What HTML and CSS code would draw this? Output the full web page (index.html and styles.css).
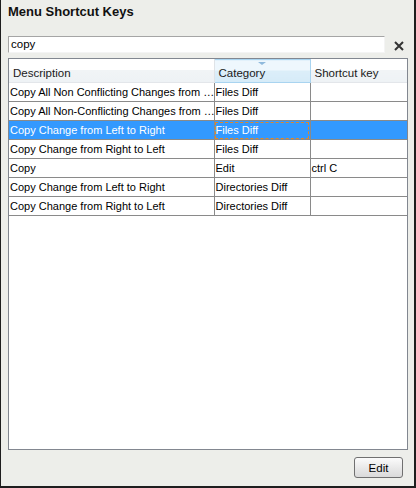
FILE: index.html
```html
<!DOCTYPE html>
<html>
<head>
<meta charset="utf-8">
<link rel="stylesheet" href="styles.css">
</head>
<body>
<div class="window">
  <div class="title">Menu Shortcut Keys</div>
  <div class="search-row">
    <div class="search">copy</div>
    <svg class="close" width="10" height="10" viewBox="0 0 10 10"><path d="M1 1L9 9M9 1L1 9" stroke="#333" stroke-width="2" fill="none"/></svg>
  </div>
  <div class="table-box">
    <table class="grid">
      <colgroup><col class="c1"><col class="c2"><col class="c3"></colgroup>
      <thead>
        <tr>
          <th>Description</th>
          <th class="sorted"><span class="tri"></span>Category</th>
          <th>Shortcut key</th>
        </tr>
      </thead>
      <tbody>
        <tr><td>Copy All Non Conflicting Changes from …</td><td>Files Diff</td><td></td></tr>
        <tr><td>Copy All Non-Conflicting Changes from …</td><td>Files Diff</td><td></td></tr>
        <tr class="sel"><td>Copy Change from Left to Right</td><td class="focus">Files Diff</td><td></td></tr>
        <tr><td>Copy Change from Right to Left</td><td>Files Diff</td><td></td></tr>
        <tr><td>Copy</td><td>Edit</td><td>ctrl C</td></tr>
        <tr><td>Copy Change from Left to Right</td><td>Directories Diff</td><td></td></tr>
        <tr><td>Copy Change from Right to Left</td><td>Directories Diff</td><td></td></tr>
      </tbody>
    </table>
  </div>
  <div class="footer">
    <button class="btn">Edit</button>
  </div>
</div>
</body>
</html>
```
FILE: styles.css
```css
html, body { margin: 0; padding: 0; }
body { font-family: "Liberation Sans", Arial, sans-serif; font-size: 11px; color: #000; }
.window {
  width: 416px; height: 488px; box-sizing: border-box;
  background: #edeeea;
  border-left: 1px solid #1e1e1e;
  border-right: 2px solid #1e1e1e;
  border-bottom: 2px solid #1e1e1e;
  padding: 0 6px 0 7px;
  display: flex; flex-direction: column;
}
.title { font-weight: bold; font-size: 13px; color: #111; padding-top: 4px; height: 16px; line-height: 16px; }
.search-row { margin-top: 16px; display: flex; align-items: center; height: 17px; }
.search {
  width: 377px; height: 17px; box-sizing: border-box;
  background: #fff;
  border-top: 1px solid #a5a5a5; border-left: 1px solid #a5a5a5;
  border-right: 1px solid #f4f4f4; border-bottom: 1px solid #f4f4f4;
  padding-left: 2px; line-height: 15px; font-size: 11.5px;
}
.close { margin-left: 9px; margin-top: 2px; }
.table-box {
  margin-top: 5px; height: 392px; box-sizing: border-box;
  border: 1px solid #828790; background: #fff; overflow: hidden;
}
.grid { border-collapse: collapse; table-layout: fixed; width: 399px; }
.c1 { width: 205px; } .c2 { width: 96px; } .c3 { width: 98px; }
th {
  height: 23px; box-sizing: border-box; padding: 4px 0 0 4px; font-weight: normal; text-align: left;
  background: linear-gradient(#ffffff 0, #ffffff 45%, #f1f4f6 46%, #eef2f5 100%);
  border-right: 1px solid #dfe3e7; border-bottom: 1px solid #e3e6ea; position: relative;
  white-space: nowrap; overflow: hidden; color: #1a1a1a; font-size: 11.5px;
}
th.sorted {
  background: linear-gradient(#eef7fd 0, #eef7fd 45%, #dceef9 46%, #d6ebf8 100%);
  border: 1px solid #a9d4f0;
}
.tri {
  position: absolute; left: 43px; top: 2px; width: 0; height: 0;
  border-left: 4px solid transparent; border-right: 4px solid transparent; border-top: 3px solid #8fb9dc;
}
td {
  height: 19px; box-sizing: border-box; padding: 0 0 0 1px;
  border-right: 1px solid #8a8a8a; border-bottom: 1px solid #8a8a8a;
  white-space: nowrap; overflow: hidden; line-height: 18px;
}
tr.sel td { background: #3399ff; color: #fff; }
td.focus { outline: 1px dashed #e0872a; outline-offset: -2px; }
.footer { flex: 1; display: flex; justify-content: flex-end; align-items: flex-start; padding-top: 7px; padding-right: 5px; }
.btn {
  width: 49px; height: 21px; font-family: "Liberation Sans", Arial, sans-serif; font-size: 11.5px; color: #000;
  border: 1px solid #707070; border-radius: 3px;
  background: linear-gradient(#fbfbfb, #e6e6e6 60%, #dadada);
  padding: 0;
}
```
